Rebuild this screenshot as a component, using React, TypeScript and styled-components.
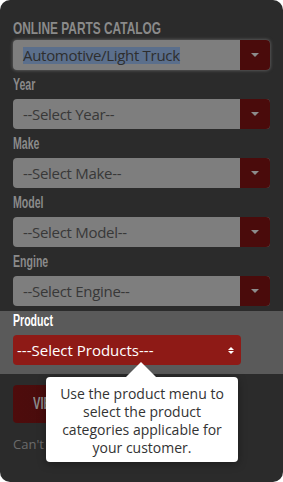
import styled, { createGlobalStyle } from "styled-components";

const GlobalStyle = createGlobalStyle`
  body {
    margin: 0;
    background: #ffffff;
  }
`;

// no condensed face is installed, so the heading faces are squeezed
const Narrow = styled.span<{ $scale?: number }>`
  display: inline-block;
  white-space: nowrap;
  transform: scaleX(${(p) => p.$scale ?? 0.66});
  transform-origin: left center;
`;

const Panel = styled.div`
  position: relative;
  width: 283px;
  height: 482px;
  background: #2b2b2b;
  border-radius: 10px;
  overflow: hidden;
  font-family: "Open Sans", sans-serif;
`;

const Inner = styled.div`
  padding: 0 13px;
`;

const Title = styled.h2`
  margin: 0;
  padding-top: 19px;
  height: 21px;
  font-family: "Liberation Sans", sans-serif;
  font-weight: bold;
  font-size: 17px;
  line-height: 20px;
  color: #8a8a8a;
`;

const Label = styled.div<{ $active?: boolean }>`
  margin-top: 6px;
  height: 18px;
  font-family: "Liberation Sans", sans-serif;
  font-weight: bold;
  font-size: 16px;
  line-height: 18px;
  color: ${(p) => (p.$active ? "#ffffff" : "#8a8a8a")};
`;

const SelectBox = styled.div<{ $focus?: boolean }>`
  display: flex;
  height: 30px;
  margin-top: ${(p) => (p.$focus ? "0" : "5px")};
  border-radius: 4px;
  overflow: hidden;
  background: #7e7e7e;
  box-shadow: ${(p) => (p.$focus ? "0 0 3px 1px #555" : "none")};
`;

const SelectText = styled.div`
  flex: 1;
  display: flex;
  align-items: center;
  padding-left: 10px;
  font-size: 15px;
  letter-spacing: -0.3px;
  color: #383838;
`;

const Highlight = styled.span`
  background: #5b6f8c;
  color: #2e2e2e;
  line-height: 17px;
`;

const ArrowBox = styled.div`
  width: 30px;
  display: flex;
  align-items: center;
  justify-content: center;
  background: #4a0b0b;
`;

const Caret = styled.span`
  width: 0;
  height: 0;
  border-left: 4px solid transparent;
  border-right: 4px solid transparent;
  border-top: 4px solid #8c8c8c;
`;

const ProductSection = styled.div`
  margin-top: 5px;
  padding: 1px 13px 9px;
  background: #5a5a5a;
  > div:first-child {
    margin-top: 0;
  }
`;

const ProductSelect = styled.div`
  display: flex;
  align-items: center;
  justify-content: space-between;
  width: 228px;
  height: 30px;
  margin-top: 5px;
  padding: 0 7px 0 4px;
  box-sizing: border-box;
  border-radius: 4px;
  background: #8e1a16;
  color: #ffffff;
  font-size: 15px;
`;

const UpDown = styled.span`
  display: flex;
  flex-direction: column;
  gap: 1px;
  &::before,
  &::after {
    content: "";
    width: 0;
    height: 0;
    border-left: 3px solid transparent;
    border-right: 3px solid transparent;
  }
  &::before {
    border-bottom: 3px solid #ffffff;
  }
  &::after {
    border-top: 3px solid #ffffff;
  }
`;

const ViewButton = styled.div`
  width: 120px;
  height: 38px;
  margin-top: 11px;
  display: flex;
  align-items: center;
  padding-left: 20px;
  box-sizing: border-box;
  border-radius: 4px;
  background: linear-gradient(90deg, #4e0c0c, #3c0d0d);
  font-family: "Liberation Sans", sans-serif;
  font-weight: bold;
  font-size: 17px;
  color: #8a8a8a;
`;

const HelpText = styled.div`
  margin-top: 12px;
  font-size: 13px;
  color: #6b6b6b;
  white-space: nowrap;
`;

const Tooltip = styled.div`
  position: absolute;
  left: 46px;
  top: 377px;
  width: 192px;
  height: 85px;
  box-sizing: border-box;
  padding-top: 8px;
  background: #ffffff;
  border-radius: 4px;
  box-shadow: 0 2px 8px rgba(0, 0, 0, 0.35);
  font-size: 14px;
  line-height: 18px;
  color: #333333;
  text-align: center;
  &::before {
    content: "";
    position: absolute;
    left: 80px;
    top: -15px;
    border-left: 15px solid transparent;
    border-right: 15px solid transparent;
    border-bottom: 15px solid #ffffff;
  }
`;

type FieldProps = { label: string; placeholder: string };

const Field = ({ label, placeholder }: FieldProps) => (
  <>
    <Label>
      <Narrow>{label}</Narrow>
    </Label>
    <SelectBox>
      <SelectText>{placeholder}</SelectText>
      <ArrowBox>
        <Caret />
      </ArrowBox>
    </SelectBox>
  </>
);

const fields = [
  { label: "Year", placeholder: "--Select Year--" },
  { label: "Make", placeholder: "--Select Make--" },
  { label: "Model", placeholder: "--Select Model--" },
  { label: "Engine", placeholder: "--Select Engine--" },
];

export default function App() {
  return (
    <>
      <GlobalStyle />
      <Panel>
        <Inner>
          <Title>
            <Narrow $scale={0.7}>ONLINE PARTS CATALOG</Narrow>
          </Title>
          <SelectBox $focus>
            <SelectText>
              <Highlight>Automotive/Light Truck</Highlight>
            </SelectText>
            <ArrowBox>
              <Caret />
            </ArrowBox>
          </SelectBox>
          {fields.map((f) => (
            <Field key={f.label} {...f} />
          ))}
        </Inner>
        <ProductSection>
          <Label $active>
            <Narrow>Product</Narrow>
          </Label>
          <ProductSelect>
            ---Select Products---
            <UpDown />
          </ProductSelect>
        </ProductSection>
        <Inner>
          <ViewButton>
            <Narrow>VIEW PARTS</Narrow>
          </ViewButton>
          <HelpText>Can't find your vehicle?</HelpText>
        </Inner>
        <Tooltip>
          Use the product menu to
          <br />
          select the product
          <br />
          categories applicable for
          <br />
          your customer.
        </Tooltip>
      </Panel>
    </>
  );
}
